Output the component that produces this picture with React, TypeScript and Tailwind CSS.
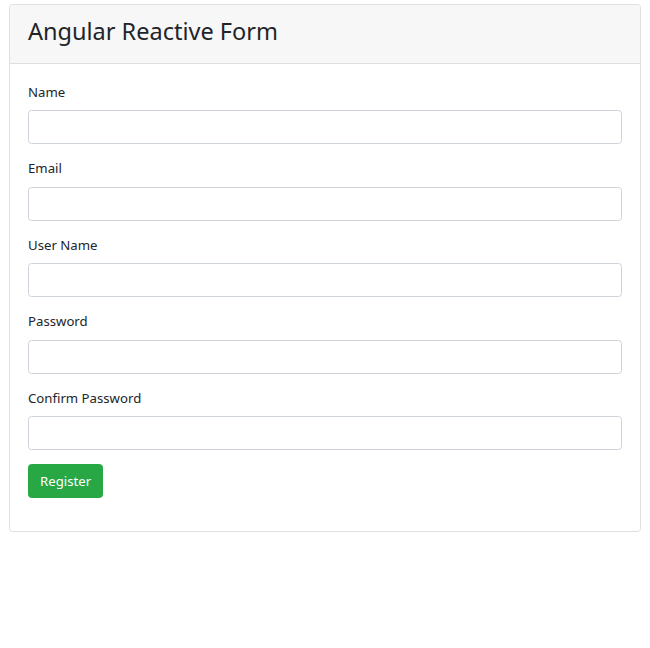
export default function App() {
  const fields = [
    { key: "name", label: "Name", type: "text" },
    { key: "email", label: "Email", type: "email" },
    { key: "username", label: "User Name", type: "text" },
    { key: "password", label: "Password", type: "password" },
    { key: "confirmPassword", label: "Confirm Password", type: "password" },
  ];

  return (
    <div
      className="min-h-[648px] bg-white px-[9px] pt-[4px] text-[13.2px] leading-[21.3px] text-[#212529]"
      style={{ fontFamily: '"Noto Sans", "Open Sans", sans-serif' }}
    >
      <div className="w-[632px] rounded-[3.5px] border border-[#dfdfdf] bg-white">
        <div className="border-b border-[#dfdfdf] bg-[#f7f7f7] px-[18px] pt-[11px] pb-[10px] rounded-t-[3.5px]">
          <h3 className="mb-[7px] text-[23.5px] leading-[30px] font-normal">Angular Reactive Form</h3>
        </div>
        <form className="p-[18px]" onSubmit={(e) => e.preventDefault()}>
          {fields.map((f) => (
            <div key={f.key} className="mb-[14.2px]">
              <label htmlFor={f.key} className="mb-[7px] block">
                {f.label}
              </label>
              <input
                id={f.key}
                type={f.type}
                className="block h-[34px] w-full rounded-[3.5px] border border-[#ced4da] bg-white px-[11px] outline-none"
              />
            </div>
          ))}
          <div className="mb-[14.2px]">
            <button
              type="submit"
              className="h-[34px] rounded-[3.5px] border border-[#28a745] bg-[#28a745] px-[11px] text-white"
            >
              Register
            </button>
          </div>
        </form>
      </div>
    </div>
  );
}
